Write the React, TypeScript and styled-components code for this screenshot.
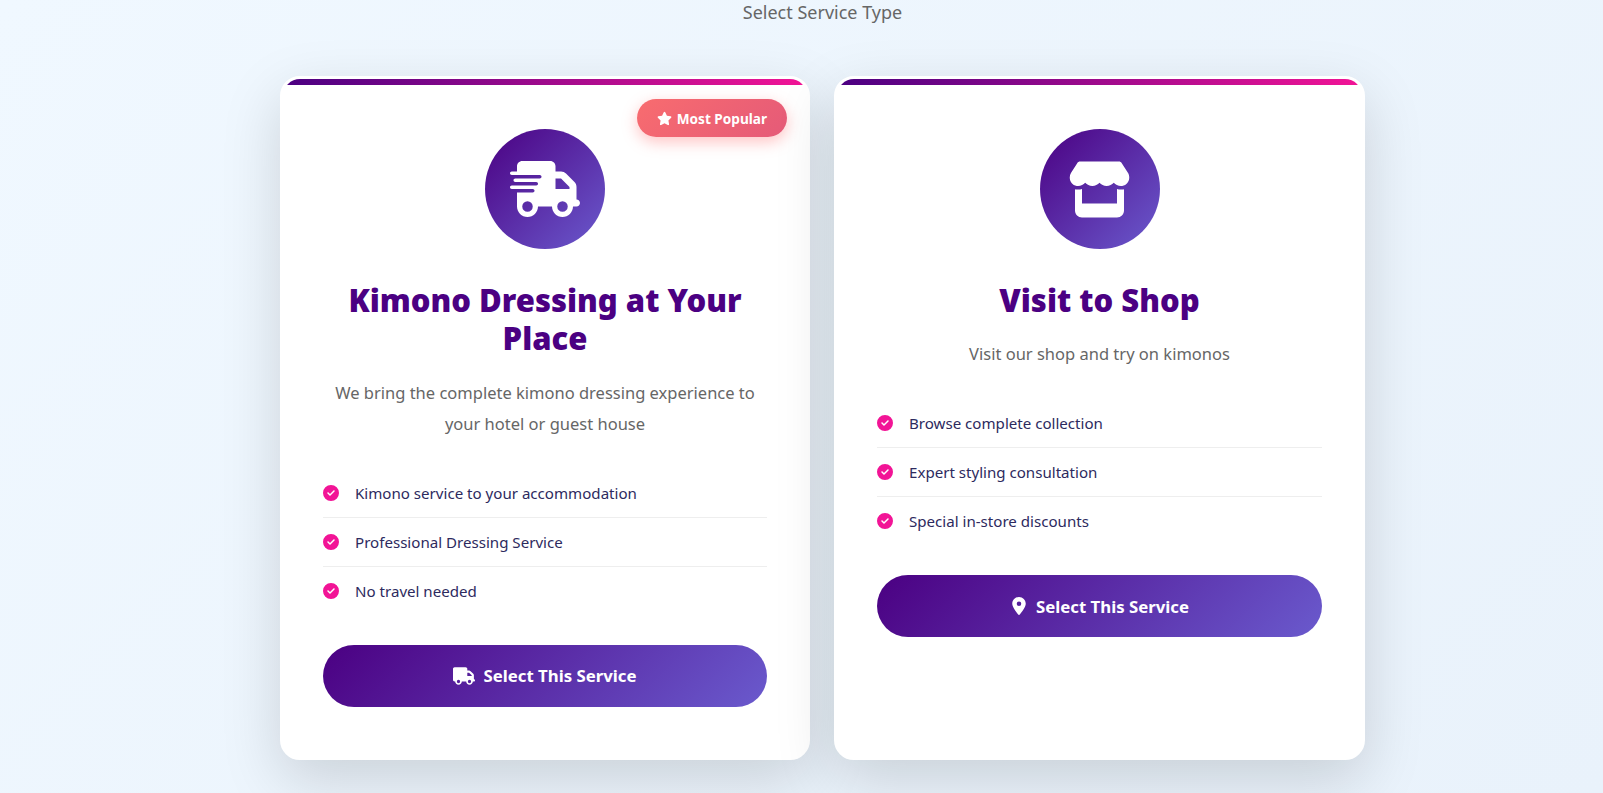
import React from 'react'
import styled, { createGlobalStyle } from 'styled-components'
import {
  FaCircleCheck,
  FaLocationDot,
  FaStar,
  FaStore,
  FaTruck,
  FaTruckFast,
} from 'react-icons/fa6'

const GlobalStyle = createGlobalStyle`
  html, body {
    margin: 0;
    padding: 0;
    height: 793px;
    overflow: hidden;
  }

  body {
    background: linear-gradient(135deg, #f0f8ff 0%, #e9f2fb 100%);
    font-family: "Noto Sans", "Open Sans", sans-serif;
  }
`

const Page = styled.main`
  box-sizing: border-box;
  height: 793px;
  padding: 0 0 0 42px;
`

// The section heading is cut close to the top edge in the reference
const Subtitle = styled.p`
  margin: 0;
  height: 76px;
  padding-top: 1px;
  box-sizing: border-box;
  font-size: 18px;
  line-height: 22px;
  color: #666;
  text-align: center;
`

const CardGrid = styled.div`
  display: grid;
  grid-template-columns: 530px 531px;
  gap: 24px;
  justify-content: center;
`

const Card = styled.article`
  position: relative;
  box-sizing: border-box;
  height: 684px;
  border: 3px solid #fff;
  border-radius: 20px;
  background: #fff;
  padding: 50px 40px;
  text-align: center;
  box-shadow: 0 20px 60px rgba(0, 0, 0, 0.15);
  overflow: hidden;
`

const TopBar = styled.div`
  position: absolute;
  top: 0;
  left: 0;
  right: 0;
  height: 6px;
  background: linear-gradient(90deg, #4b0082, #f21496);
`

const Badge = styled.div`
  position: absolute;
  top: 20px;
  right: 20px;
  display: flex;
  align-items: center;
  gap: 5px;
  height: 38px;
  box-sizing: border-box;
  padding: 0 20px;
  border-radius: 25px;
  background: linear-gradient(135deg, #f86c6f, #e55a78);
  color: #fff;
  font-size: 13.6px;
  font-weight: 700;
  box-shadow: 0 5px 15px rgba(255, 107, 107, 0.4);

  svg {
    width: 15px;
    height: 15px;
  }
`

const IconCircle = styled.div`
  display: flex;
  align-items: center;
  justify-content: center;
  width: 120px;
  height: 120px;
  margin: 0 auto 32px;
  border-radius: 50%;
  background: linear-gradient(135deg, #4b0082, #6a5acd);
  color: #fff;
`

const Title = styled.h2`
  margin: 0 0 19px;
  font-size: 31px;
  line-height: 38.4px;
  font-weight: 900;
  color: #4b0082;
`

const Description = styled.p`
  margin: 0 0 30px;
  font-size: 16.5px;
  line-height: 31px;
  color: #666;
`

const FeatureList = styled.ul`
  list-style: none;
  margin: 0 0 30px;
  padding: 0;
`

const Feature = styled.li`
  display: flex;
  align-items: center;
  gap: 16px;
  padding: 12px 0;
  font-size: 15.1px;
  line-height: 24px;
  color: #2d2a5e;
  text-align: left;
  border-bottom: 1px solid #eee;

  &:last-child {
    border-bottom: none;
  }

  svg {
    flex: none;
    color: #f21496;
  }
`

const SelectButton = styled.button`
  display: flex;
  align-items: center;
  justify-content: center;
  gap: 8px;
  width: 100%;
  height: 62px;
  border: none;
  border-radius: 50px;
  background: linear-gradient(135deg, #4b0082, #6a5acd);
  color: #fff;
  font-family: inherit;
  font-size: 16.8px;
  font-weight: 700;
`

type Service = {
  title: string
  description: string
  features: string[]
  icon: React.ReactNode
  buttonIcon: React.ReactNode
  popular?: boolean
}

// FA icons are square boxes here, so sizes are the glyph's width at 1em tall
const services: Service[] = [
  {
    title: 'Kimono Dressing at Your Place',
    description:
      'We bring the complete kimono dressing experience to your hotel or guest house',
    features: [
      'Kimono service to your accommodation',
      'Professional Dressing Service',
      'No travel needed',
    ],
    icon: <FaTruckFast size={70} />,
    buttonIcon: <FaTruck size={22} />,
    popular: true,
  },
  {
    title: 'Visit to Shop',
    description: 'Visit our shop and try on kimonos',
    features: [
      'Browse complete collection',
      'Expert styling consultation',
      'Special in-store discounts',
    ],
    icon: <FaStore size={63} />,
    buttonIcon: <FaLocationDot size={18} />,
  },
]

export default function App() {
  return (
    <>
      <GlobalStyle />
      <Page>
        <Subtitle>Select Service Type</Subtitle>
        <CardGrid>
          {services.map((service) => (
            <Card key={service.title}>
              <TopBar />
              {service.popular && (
                <Badge>
                  <FaStar />
                  Most Popular
                </Badge>
              )}
              <IconCircle>{service.icon}</IconCircle>
              <Title>{service.title}</Title>
              <Description>{service.description}</Description>
              <FeatureList>
                {service.features.map((feature) => (
                  <Feature key={feature}>
                    <FaCircleCheck size={16} />
                    {feature}
                  </Feature>
                ))}
              </FeatureList>
              <SelectButton>
                {service.buttonIcon}
                Select This Service
              </SelectButton>
            </Card>
          ))}
        </CardGrid>
      </Page>
    </>
  )
}
